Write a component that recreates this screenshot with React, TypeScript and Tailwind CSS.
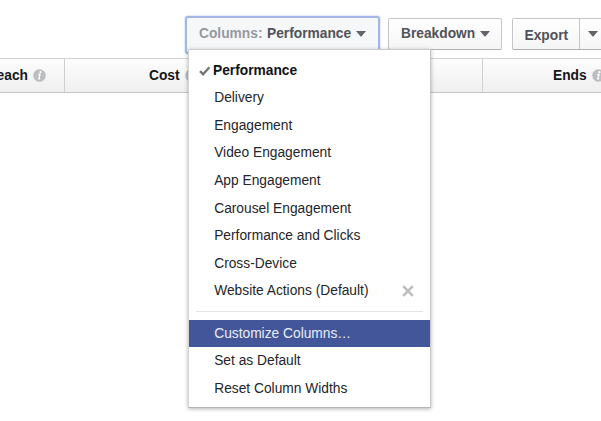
const presets = [
  "Delivery",
  "Engagement",
  "Video Engagement",
  "App Engagement",
  "Carousel Engagement",
  "Performance and Clicks",
  "Cross-Device",
];

function Caret() {
  return (
    <svg width="10" height="6" viewBox="0 0 10 6" className="shrink-0 fill-[#606369]">
      <path d="M0 0H10L5.6 5.2Q5 5.8 4.4 5.2Z" />
    </svg>
  );
}

function Info() {
  return (
    <svg width="13" height="13" viewBox="0 0 13 13" className="shrink-0">
      <circle cx="6.5" cy="6.5" r="6.3" fill="#bdbec1" />
      <circle cx="7.4" cy="3.2" r="1.1" fill="#fff" />
      <path d="M5.2 5.5H7L5.9 9.8H7.2" fill="none" stroke="#fff" strokeWidth="1.3" />
    </svg>
  );
}

function Item({ label, active = false }: { label: string; active?: boolean }) {
  return (
    <div
      className={
        active
          ? "flex h-[27.6px] items-center bg-[#43569a] pl-[25.2px] text-[#e9edf8]"
          : "flex h-[27.6px] items-center pl-[25.2px]"
      }
    >
      {label}
    </div>
  );
}

function Menu() {
  return (
    <div className="absolute left-[188px] top-[49px] h-[359px] w-[243px] border border-t-[#c9cacc] border-r-[#c8c8c8] border-b-[#b5b5b5] border-l-[#d4d4d4] bg-white pt-[6.8px] text-[#24262b] shadow-[0_1px_4px_rgba(0,0,0,0.3)]">
      <div className="flex h-[27.6px] items-center pl-[10px] font-bold text-[#111216]">
        <svg width="12" height="10" viewBox="0 0 12 10" className="mr-[2px] shrink-0">
          <path d="M1 5.2L4.1 8.2L10.4 1.2" fill="none" stroke="#75777a" strokeWidth="2.4" />
        </svg>
        Performance
      </div>
      {presets.map((label) => (
        <Item key={label} label={label} />
      ))}
      <div className="flex h-[27.6px] items-center justify-between pr-[16px] pl-[25.2px]">
        Website Actions (Default)
        <svg width="12" height="12" viewBox="0 0 12 12">
          <path d="M1.2 1.2L10.8 10.8M10.8 1.2L1.2 10.8" stroke="#bdbdbd" strokeWidth="2.5" />
        </svg>
      </div>
      <div className="mx-[7px] mt-[6.2px] mb-[7.5px] h-px bg-[#e5e4e2]" />
      <Item label="Customize Columns…" active />
      <Item label="Set as Default" />
      <Item label="Reset Column Widths" />
    </div>
  );
}

export default function App() {
  return (
    <div className="relative h-[421px] w-[601px] overflow-hidden bg-white font-['Liberation_Sans',Arial,sans-serif] text-[13.78px] leading-4">
      <div className="flex h-[58px] items-start pt-4 pl-[185px] font-bold text-[#505359]">
        <div className="flex h-[38px] w-[195px] shrink-0 items-start rounded-[3px] border-2 border-[#a3b8e4] bg-[#f6f7f9] pt-[8px] pl-[12px] shadow-[0_0_2px_#a3b8e4]">
          <span className="text-[#96989e]">Columns:</span>
          <span className="ml-[4.5px]">Performance</span>
          <span className="mt-[5px] ml-[5px] flex">
            <Caret />
          </span>
        </div>
        <div className="mt-[2px] ml-2 flex h-8 w-[114px] shrink-0 items-center rounded-[2px] border border-[#c5c6c9] border-b-[#aeafb2] bg-linear-to-b from-white to-[#f5f5f6] pb-px pl-[12px]">
          Breakdown
          <span className="ml-[5px] flex">
            <Caret />
          </span>
        </div>
        <div className="mt-[2px] ml-[10px] flex h-8 w-[100px] shrink-0 items-center rounded-[2px] border border-[#c5c6c9] border-b-[#aeafb2] bg-linear-to-b from-white to-[#f5f5f6]">
          <span className="flex h-full w-[67px] items-center border-r border-[#c5c6c9] pt-[3px] pl-[11.5px]">
            Export
          </span>
          <span className="ml-[8px] flex">
            <Caret />
          </span>
        </div>
      </div>
      <div className="flex h-[35px] border-t border-b border-t-[#d2d2d3] border-b-[#c3c3c4] bg-linear-to-b from-[#fdfdfd] to-[#efeff0] font-bold text-[#15161a]">
        <div className="flex w-[65px] shrink-0 items-center justify-end gap-[5px] border-r border-[#cfcfd0] pr-[18px]">
          <span>each</span>
          <Info />
        </div>
        <div className="flex w-[418px] shrink-0 items-center gap-[5px] border-r border-[#cfcfd0] pl-[84px]">
          <span>Cost</span>
          <Info />
        </div>
        <div className="flex w-[140px] shrink-0 items-center gap-[5px] pl-[70px]">
          <span>Ends</span>
          <Info />
        </div>
      </div>
      <Menu />
    </div>
  );
}
